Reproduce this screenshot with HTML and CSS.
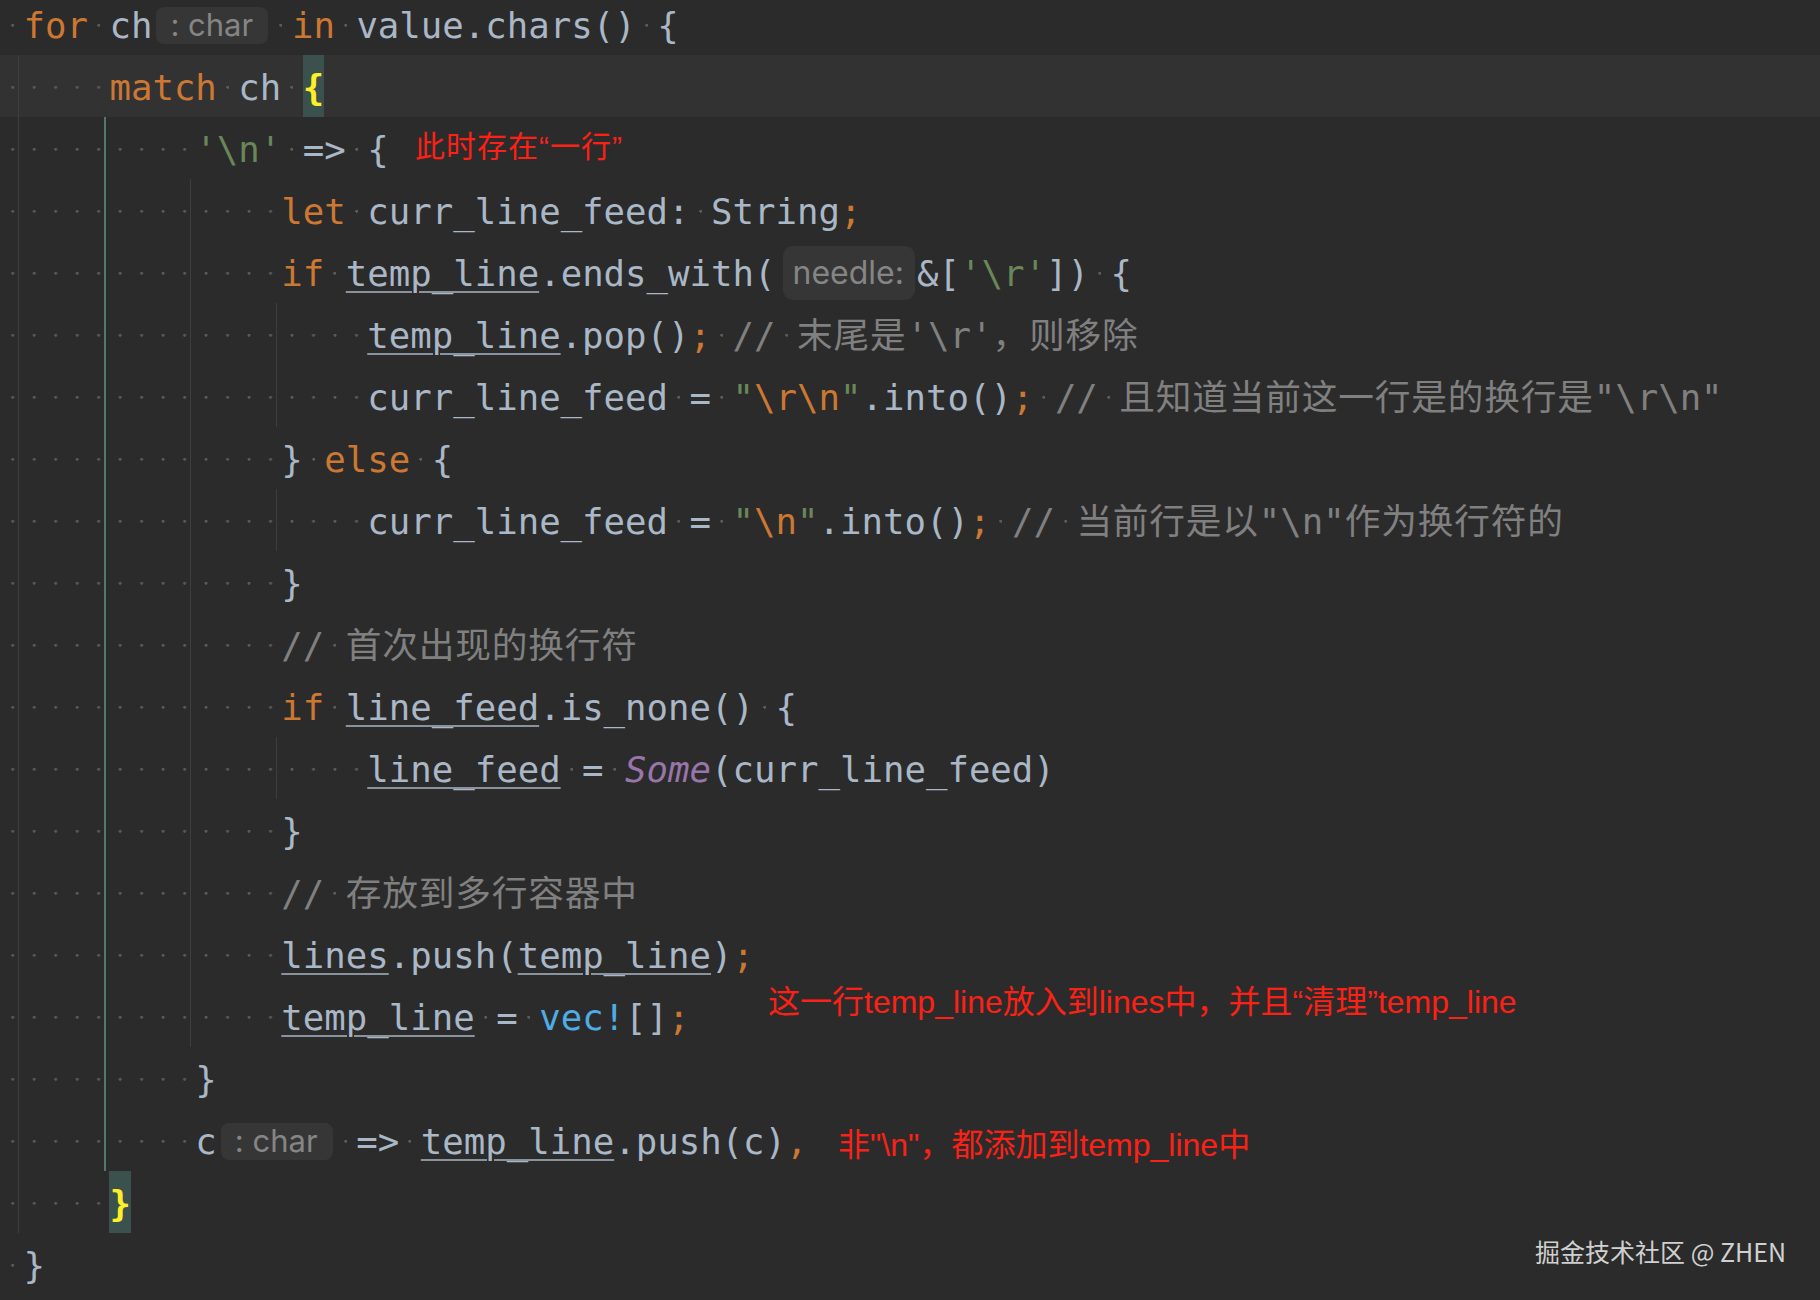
FILE: index.html
```html
<!DOCTYPE html>
<html lang="zh">
<head>
<meta charset="utf-8">
<title>Rust match</title>
<link rel="stylesheet" href="styles.css">
</head>
<body>
<div class="editor">
<div class="ln"><i class="w"></i><span class="k">for</span><i class="w"></i>ch<span class="hint ht">: char</span><i class="w"></i><span class="k">in</span><i class="w"></i>value.chars()<i class="w"></i>{</div>
<div class="ln cur g1"><i class="w w5"></i><span class="k">match</span><i class="w"></i>ch<i class="w"></i><span class="y">{</span></div>
<div class="ln g1 g2"><i class="w w9"></i><span class="s">'\n'</span><i class="w"></i>=&gt;<i class="w"></i>{<span class="note n1">此时存在“一行”</span></div>
<div class="ln g1 g2 g3"><i class="w w13"></i><span class="k">let</span><i class="w"></i>curr_line_feed:<i class="w"></i>String<span class="o">;</span></div>
<div class="ln g1 g2 g3"><i class="w w13"></i><span class="k">if</span><i class="w"></i><span class="u">temp_line</span>.ends_with(<span class="hint hn">needle:</span>&amp;[<span class="s">'\r'</span>])<i class="w"></i>{</div>
<div class="ln g1 g2 g3 g4"><i class="w w17"></i><span class="u">temp_line</span>.pop()<span class="o">;</span><i class="w"></i><span class="c">//</span><i class="w"></i><span class="c"><span class="cj">末尾是</span>'\r'<span class="cj">，则移除</span></span></div>
<div class="ln g1 g2 g3 g4"><i class="w w17"></i>curr_line_feed<i class="w"></i>=<i class="w"></i><span class="s">"</span><span class="o">\r\n</span><span class="s">"</span>.into()<span class="o">;</span><i class="w"></i><span class="c">//</span><i class="w"></i><span class="c"><span class="cj">且知道当前这一行是的换行是</span>"\r\n"</span></div>
<div class="ln g1 g2 g3"><i class="w w13"></i>}<i class="w"></i><span class="k">else</span><i class="w"></i>{</div>
<div class="ln g1 g2 g3 g4"><i class="w w17"></i>curr_line_feed<i class="w"></i>=<i class="w"></i><span class="s">"</span><span class="o">\n</span><span class="s">"</span>.into()<span class="o">;</span><i class="w"></i><span class="c">//</span><i class="w"></i><span class="c"><span class="cj">当前行是以</span>"\n"<span class="cj">作为换行符的</span></span></div>
<div class="ln g1 g2 g3"><i class="w w13"></i>}</div>
<div class="ln g1 g2 g3"><i class="w w13"></i><span class="c">//</span><i class="w"></i><span class="c cj">首次出现的换行符</span></div>
<div class="ln g1 g2 g3"><i class="w w13"></i><span class="k">if</span><i class="w"></i><span class="u">line_feed</span>.is_none()<i class="w"></i>{</div>
<div class="ln g1 g2 g3 g4"><i class="w w17"></i><span class="u">line_feed</span><i class="w"></i>=<i class="w"></i><span class="p">Some</span>(curr_line_feed)</div>
<div class="ln g1 g2 g3"><i class="w w13"></i>}</div>
<div class="ln g1 g2 g3"><i class="w w13"></i><span class="c">//</span><i class="w"></i><span class="c cj">存放到多行容器中</span></div>
<div class="ln g1 g2 g3"><i class="w w13"></i><span class="u">lines</span>.push(<span class="u">temp_line</span>)<span class="o">;</span></div>
<div class="ln g1 g2 g3"><i class="w w13"></i><span class="u">temp_line</span><i class="w"></i>=<i class="w"></i><span class="m">vec!</span>[]<span class="o">;</span><span class="note n2">这一行temp_line放入到lines中，并且“清理”temp_line</span></div>
<div class="ln g1 g2"><i class="w w9"></i>}</div>
<div class="ln g1 g2"><i class="w w9"></i>c<span class="hint ht">: char</span><i class="w"></i>=&gt;<i class="w"></i><span class="u">temp_line</span>.push(c)<span class="o">,</span><span class="note n3">非"\n"，都添加到temp_line中</span></div>
<div class="ln g1"><i class="w w5"></i><span class="y">}</span></div>
<div class="ln"><i class="w"></i>}</div>
</div>
<div class="mark">掘金技术社区 @ ZHEN</div>
</body>
</html>
```

FILE: styles.css
```css
* {
  box-sizing: border-box;
  margin: 0;
  padding: 0;
}

html,
body {
  background: #2b2b2b;
}

body {
  width: 1820px;
  height: 1300px;
  overflow: hidden;
  position: relative;
}

.editor {
  margin-top: -7px;
  font-family: "DejaVu Sans Mono", "Noto Sans CJK SC", monospace;
  font-size: 35.7px;
  line-height: 62px;
  color: #a9b7c6;
}

.ln {
  position: relative;
  height: 62px;
  padding-top: 2px;
  padding-left: 2px;
  white-space: pre;
  background-image: var(--g1, none), var(--g2, none), var(--g3, none), var(--g4, none);
  background-repeat: no-repeat;
  background-size: 1px 100%, 2px 100%, 1px 100%, 1px 100%;
  background-position: 18px 0, 104px 0, 190px 0, 276px 0;
}

.g1 { --g1: linear-gradient(#3e3e3e, #3e3e3e); }
.g2 { --g2: linear-gradient(#56766c, #56766c); }
.g3 { --g3: linear-gradient(#3e3e3e, #3e3e3e); }
.g4 { --g4: linear-gradient(#3e3e3e, #3e3e3e); }

.cur {
  background-color: #323232;
}

/* whitespace markers */
.w {
  display: inline-block;
  width: 1ch;
  height: 62px;
  margin-top: -2px;
  vertical-align: top;
  background-image: radial-gradient(circle at 50% 52%, #5a5a5a 0 1.2px, transparent 1.8px);
  background-size: 1ch 100%;
  background-repeat: repeat-x;
  background-position: 0 0;
}

.w5 { width: 5ch; }
.w9 { width: 9ch; }
.w13 { width: 13ch; }
.w17 { width: 17ch; }

/* syntax */
.k { color: #cc7832; }
.o { color: #cc7832; }
.s { color: #6a8759; }
.c { color: #808080; }
.cj { letter-spacing: 0.8px; }
.m { color: #4eade5; }
.p { color: #9876aa; font-style: italic; }

.u {
  text-decoration: underline;
  text-decoration-thickness: 2px;
  text-underline-offset: 5px;
  text-decoration-color: rgba(169, 183, 198, 0.75);
}

.y {
  display: inline-block;
  height: 62px;
  margin-top: -2px;
  padding-top: 2px;
  vertical-align: top;
  color: #ffef28;
  font-weight: bold;
  background: #3b514d;
}

/* inlay hints */
.hint {
  display: inline-block;
  vertical-align: top;
  font-family: Inter, "Noto Sans", sans-serif;
  color: #858585;
  background: #363636;
}

.ht {
  width: 112px;
  height: 37px;
  line-height: 36px;
  margin: 12px 2px 0 4px;
  padding-left: 14px;
  font-size: 31px;
  border-radius: 8px;
}

.hn {
  width: 132px;
  height: 54px;
  line-height: 53px;
  margin: 3px 2.5px 0 7px;
  padding-left: 10px;
  font-size: 32px;
  border-radius: 10px;
}

/* red annotations laid over the screenshot */
.note {
  position: absolute;
  line-height: 1;
  white-space: nowrap;
  color: #fb2116;
  font-family: "Liberation Sans", "Noto Sans CJK SC", sans-serif;
}

.n1 {
  left: 415px;
  top: 15px;
  font-size: 30px;
  letter-spacing: 1px;
}

.n2 {
  left: 768px;
  top: 1px;
  font-size: 32px;
}

.n3 {
  left: 838px;
  top: 20px;
  font-size: 32px;
}

.mark {
  position: absolute;
  right: 34px;
  top: 1239px;
  font-family: "Noto Sans CJK SC", sans-serif;
  font-size: 25px;
  line-height: 1;
  color: #d0d0d0;
  white-space: nowrap;
}
```
